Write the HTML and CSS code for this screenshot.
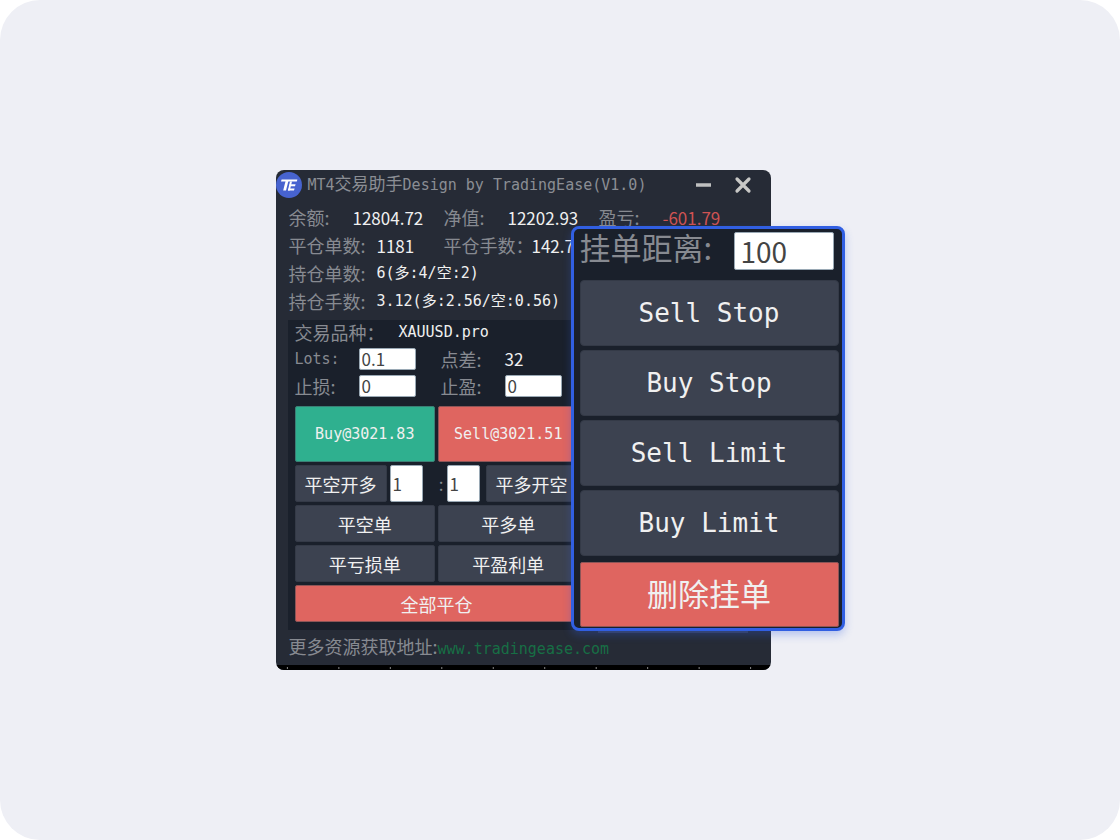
FILE: index.html
```
<!DOCTYPE html>
<html lang="zh-CN">

<head>
  <meta charset="utf-8">
  <title>MT4交易助手</title>
  <link rel="stylesheet" href="styles.css">
</head>

<body>
  <main class="stage">
    <div class="showcase">
      <section class="window">
        <header class="titlebar">
          <svg class="logo" viewBox="0 0 26 26" aria-hidden="true">
            <circle cx="13" cy="13" r="13" fill="#4763cf"/>
            <path d="M5.6 7.4H21.4L20.8 9.6H5Z" fill="#fff"/>
            <path d="M9.6 9L7.2 18.6H10L12.4 9Z" fill="#fff"/>
            <path d="M13.6 12.2H19.6L19 14.2H13.1ZM12.4 16.6H18.6L18 18.6H11.9Z" fill="#fff"/>
            <path d="M14 9.4L11.9 18.6H13.8L16 9.4Z" fill="#fff"/>
          </svg>
          <h1>MT4<span class="cn">交易助手</span>Design by TradingEase(V1.0)</h1>
          <button class="win-btn" type="button" aria-label="最小化">
            <svg viewBox="0 0 20 20"><path d="M3 10H18" stroke="#bfc0c0" stroke-width="3.6"/></svg>
          </button>
          <button class="win-btn" type="button" aria-label="关闭">
            <svg viewBox="0 0 20 20"><path d="M4 4L16 16M16 4L4 16" stroke="#c8c8c6" stroke-width="3.2" stroke-linecap="round"/></svg>
          </button>
        </header>

        <div class="stats">
          <div class="stat-row">
            <p class="stat"><span class="label short">余额:</span><span>12804.72</span></p>
            <p class="stat"><span class="label short">净值:</span><span>12202.93</span></p>
            <p class="stat"><span class="label short">盈亏:</span><span class="loss">-601.79</span></p>
          </div>
          <div class="stat-row">
            <p class="stat"><span class="label">平仓单数:</span><span>1181</span></p>
            <p class="stat"><span class="label">平仓手数：</span><span>142.78</span></p>
          </div>
          <div class="stat-row">
            <p class="stat"><span class="label">持仓单数:</span><span class="mono">6(多:4/空:2)</span></p>
          </div>
          <div class="stat-row">
            <p class="stat"><span class="label">持仓手数:</span><span class="mono">3.12(多:2.56/空:0.56)</span></p>
          </div>
        </div>

        <div class="panel">
          <div class="trade">
            <div class="fields">
              <div class="field wide">
                <span class="label symbol">交易品种：</span><span class="mono">XAUUSD.pro</span>
              </div>
              <div class="field">
                <label class="label mono" for="lots">Lots:</label><input id="lots" type="text" value="0.1">
              </div>
              <div class="field">
                <span class="label">点差:</span><span>32</span>
              </div>
              <div class="field">
                <label class="label" for="stopLoss">止损:</label><input id="stopLoss" type="text" value="0">
              </div>
              <div class="field">
                <label class="label" for="takeProfit">止盈:</label><input id="takeProfit" type="text" value="0">
              </div>
            </div>

            <div class="btn-row">
              <button class="btn quote buy" type="button">Buy@3021.83</button>
              <button class="btn quote sell" type="button">Sell@3021.51</button>
            </div>
            <div class="btn-row ratio">
              <button class="btn" type="button">平空开多</button>
              <input type="text" value="1" aria-label="平空开多比例">
              <span class="colon">:</span>
              <input type="text" value="1" aria-label="平多开空比例">
              <button class="btn last" type="button">平多开空</button>
            </div>
            <div class="btn-row">
              <button class="btn" type="button">平空单</button>
              <button class="btn" type="button">平多单</button>
            </div>
            <div class="btn-row">
              <button class="btn" type="button">平亏损单</button>
              <button class="btn" type="button">平盈利单</button>
            </div>
            <div class="btn-row">
              <button class="btn sell" type="button">全部平仓</button>
            </div>
          </div>
        </div>

        <footer class="footer">更多资源获取地址:<a class="mono" href="#">www.tradingease.com</a></footer>
        <div class="ruler"></div>
      </section>

      <section class="pending">
        <div class="distance">
          <label for="distance">挂单距离:</label>
          <input id="distance" type="text" value="100">
        </div>
        <button class="btn" type="button">Sell Stop</button>
        <button class="btn" type="button">Buy Stop</button>
        <button class="btn" type="button">Sell Limit</button>
        <button class="btn" type="button">Buy Limit</button>
        <button class="btn sell" type="button">删除挂单</button>
      </section>
    </div>
  </main>
</body>

</html>
```

FILE: styles.css
```
* {
  box-sizing: border-box;
}

body {
  margin: 0;
  background: #fff;
  color: #f0f0f0;
  font: 17px/24px "Noto Sans CJK SC", sans-serif;
}

h1,
p {
  margin: 0;
  font-size: 17px;
  font-weight: normal;
}

button,
input {
  font: inherit;
  color: inherit;
}

input {
  min-width: 0;
  padding: 0 2px;
  border: 1px solid #9aa9b5;
  border-radius: 2px;
  background: #fff;
  color: #444;
}

.stage {
  display: flex;
  align-items: center;
  justify-content: center;
  min-height: 100vh;
  border-radius: 40px;
  background: #eeeff5;
}

.showcase {
  position: relative;
  width: 569px;
  padding-right: 74px;
}

/* main window */
.window {
  overflow: hidden;
  border-radius: 8px;
  background: #262b36;
  white-space: nowrap;
}

.titlebar {
  display: flex;
  align-items: center;
  height: 29px;
  padding-right: 18px;
  gap: 20px;
}

.titlebar h1 {
  flex: 1;
  margin-left: -14px;
  color: #8b8e94;
  font-family: "DejaVu Sans Mono", "Noto Sans CJK SC", monospace;
  font-size: 15px;
}

.cn {
  font-size: 17px;
}

.logo {
  width: 26px;
  height: 26px;
}

.win-btn {
  display: flex;
  padding: 0;
  border: 0;
  background: none;
}

.win-btn svg {
  width: 20px;
  height: 20px;
}

.label {
  flex: none;
  color: #878a91;
  font-size: 18px;
}

.mono {
  font-family: "DejaVu Sans Mono", "Noto Sans CJK SC", monospace;
  font-size: 15px;
}

.stats {
  display: grid;
  gap: 1px;
  padding: 5px 13px 5px;
}

.stat-row {
  display: flex;
}

.stat {
  display: flex;
  width: 155px;
  line-height: 27px;
}

.stat .label {
  width: 88px;
}

.stat .short {
  width: 64px;
}

.loss {
  color: #cf5353;
}

.panel {
  margin: 0 7px 0 12px;
  padding: 0 7px 8px;
  background: #1a202b;
}

.trade {
  display: grid;
  gap: 3px;
  width: 284px;
}

.fields {
  display: grid;
  grid-template-columns: 146px 1fr;
  gap: 3px 0;
  margin-bottom: 5px;
}

.field {
  display: flex;
  align-items: center;
  height: 24px;
}

.field.wide {
  grid-column: 1 / 3;
}

.field .label {
  width: 64px;
}

.field .symbol {
  width: 104px;
}

.field input {
  width: 57px;
  height: 22px;
}

.btn-row {
  display: flex;
  gap: 3px;
}

.btn {
  flex: 1;
  height: 37px;
  padding: 0;
  border: 1px solid #343a47;
  border-radius: 2px;
  background: #3c4250;
  font-size: 18px;
}

.quote {
  height: 56px;
  font-family: "DejaVu Sans Mono", monospace;
  font-size: 15px;
}

.buy {
  border-color: #3b7f75;
  background: #2fb08f;
}

.sell {
  border-color: #8d5557;
  background: #df6560;
}

.ratio .btn {
  flex: none;
  width: 92px;
}

.ratio input {
  width: 33px;
  height: 37px;
}

.ratio .last {
  margin-left: 3px;
}

.colon {
  width: 18px;
  line-height: 37px;
  text-align: right;
  color: #878a91;
}

.footer {
  height: 35px;
  padding: 0 13px;
  color: #878a91;
  font-size: 18px;
  line-height: 32px;
}

.footer a {
  color: #176f45;
  text-decoration: none;
}

/* chart axis left visible under the window */
.ruler {
  height: 5px;
  background: #000 linear-gradient(90deg, transparent 11px, #8a8a8a 11px 12px, transparent 12px) 0 2px / 10.4% 2px repeat-x;
}

/* enlarged pending order box */
.pending {
  position: absolute;
  top: 56px;
  right: 0;
  display: grid;
  gap: 4px;
  width: 274px;
  padding: 3px 3px 1px 6px;
  border: 3px solid #315fe2;
  border-radius: 8px;
  background: #1a202b;
  box-shadow: 0 4px 8px rgba(49, 95, 226, 0.3), -35px 64px 0 -62px #353d56;
  font-size: 31px;
}

.distance {
  display: flex;
  justify-content: space-between;
  height: 44px;
  padding-right: 5px;
  line-height: 30px;
  color: #878a91;
}

.distance input {
  width: 100px;
  height: 38px;
  padding: 0 6px;
  font-size: 28px;
}

.pending .btn {
  height: 66px;
  border-radius: 4px;
  font-family: "DejaVu Sans Mono", "Noto Sans CJK SC", monospace;
  font-size: 26px;
}

.pending .sell {
  height: 65px;
  margin-top: 2px;
  border-radius: 2px;
  font-size: 31px;
}
```
